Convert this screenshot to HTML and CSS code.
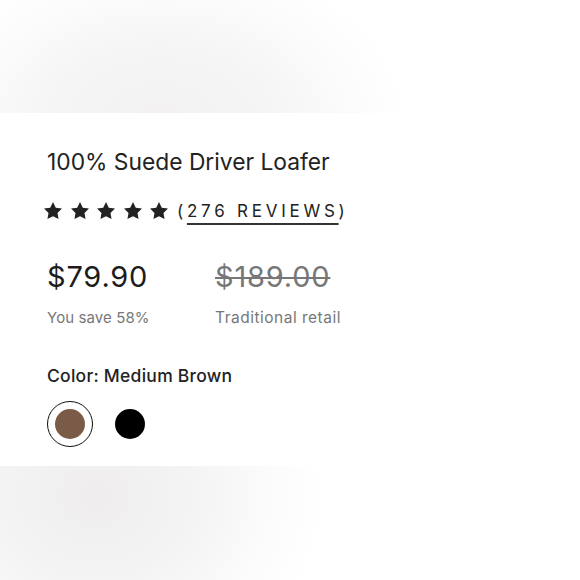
FILE: index.html
```html
<!DOCTYPE html>
<html lang="en">
<head>
<meta charset="utf-8">
<title>100% Suede Driver Loafer</title>
<link rel="stylesheet" href="styles.css">
</head>
<body>
<div class="backdrop-top"></div>
<section class="panel">
  <h1 class="title">100% Suede Driver Loafer</h1>
  <div class="rating">
    <div class="stars">
      <svg class="star" viewBox="2 2 20 19.02"><path d="M12 2l3.09 6.26L22 9.27l-5 4.87 1.18 6.88L12 17.77l-6.18 3.25L7 14.14 2 9.27l6.91-1.01L12 2z"/></svg>
      <svg class="star" viewBox="2 2 20 19.02"><path d="M12 2l3.09 6.26L22 9.27l-5 4.87 1.18 6.88L12 17.77l-6.18 3.25L7 14.14 2 9.27l6.91-1.01L12 2z"/></svg>
      <svg class="star" viewBox="2 2 20 19.02"><path d="M12 2l3.09 6.26L22 9.27l-5 4.87 1.18 6.88L12 17.77l-6.18 3.25L7 14.14 2 9.27l6.91-1.01L12 2z"/></svg>
      <svg class="star" viewBox="2 2 20 19.02"><path d="M12 2l3.09 6.26L22 9.27l-5 4.87 1.18 6.88L12 17.77l-6.18 3.25L7 14.14 2 9.27l6.91-1.01L12 2z"/></svg>
      <svg class="star" viewBox="2 2 20 19.02"><path d="M12 2l3.09 6.26L22 9.27l-5 4.87 1.18 6.88L12 17.77l-6.18 3.25L7 14.14 2 9.27l6.91-1.01L12 2z"/></svg>
    </div>
    <span class="reviews">(<a class="reviews-link" href="#">276 REVIEWS</a>)</span>
  </div>
  <div class="prices">
    <div class="price-col price-col--now">
      <div class="price">$79.90</div>
      <div class="price-note">You save 58%</div>
    </div>
    <div class="price-col price-col--old">
      <div class="price price--old">$189.00</div>
      <div class="price-note">Traditional retail</div>
    </div>
  </div>
  <div class="color-label">Color: Medium Brown</div>
  <div class="swatches">
    <span class="swatch swatch--selected"><span class="swatch-dot swatch-dot--brown"></span></span>
    <span class="swatch swatch--plain"><span class="swatch-dot swatch-dot--black"></span></span>
  </div>
</section>
<div class="backdrop-bottom"></div>
</body>
</html>
```
FILE: styles.css
```css
html, body {
  margin: 0;
  padding: 0;
  background: #fff;
}
body {
  font-family: Inter, "Liberation Sans", sans-serif;
  color: #222;
  width: 580px;
  height: 580px;
  overflow: hidden;
}
.backdrop-top {
  height: 113px;
  background: radial-gradient(ellipse 250px 180px at 160px 130px, #f2f0f0 0%, #f6f5f5 45%, #fbfbfb 75%, #fff 100%);
}
.backdrop-bottom {
  height: 114px;
  background: radial-gradient(ellipse 230px 200px at 95px 30px, #efeded 0%, #f4f3f3 40%, #fbfbfb 75%, #fff 100%);
}
.panel {
  background: #fff;
  padding: 35px 0 19px 47px;
}
.title {
  margin: 0;
  font-size: 22.8px;
  line-height: 28px;
  font-weight: 400;
  color: #222;
}
.rating {
  margin-top: 23px;
  display: flex;
  align-items: center;
  height: 24px;
  margin-left: -3px;
}
.stars {
  display: flex;
  gap: 8.5px;
}
.star {
  width: 18px;
  height: 17.1px;
  fill: #222;
  display: block;
}
.reviews {
  margin-left: 9px;
  font-size: 17px;
  line-height: 24px;
  letter-spacing: 3.75px;
  color: #222;
}
.reviews-link {
  color: #222;
  text-decoration: underline;
  text-decoration-thickness: 2px;
  text-underline-offset: 6px;
  text-decoration-color: #333;
}
.prices {
  margin-top: 37px;
  display: flex;
}
.price-col--now {
  width: 168px;
}
.price {
  font-size: 29px;
  line-height: 34px;
  letter-spacing: 0.8px;
  color: #1c1c1c;
}
.price--old {
  color: #777;
  text-decoration: line-through;
  text-decoration-thickness: 2px;
}
.price-note {
  margin-top: 13.5px;
  font-size: 15px;
  line-height: 20px;
  letter-spacing: 0.1px;
  color: #777;
}
.price-col--old .price-note {
  font-size: 15.5px;
  letter-spacing: 0.5px;
}
.color-label {
  margin-top: 36.5px;
  font-size: 17.5px;
  line-height: 24px;
  letter-spacing: 0.25px;
  font-weight: 500;
  color: #222;
}
.swatches {
  margin-top: 13px;
  display: flex;
  align-items: center;
  gap: 22px;
}
.swatch {
  width: 46px;
  height: 46px;
  display: flex;
  align-items: center;
  justify-content: center;
  border-radius: 50%;
  box-sizing: border-box;
}
.swatch--plain {
  width: 30px;
}
.swatch--selected {
  border: 1.5px solid #111;
}
.swatch-dot {
  width: 30px;
  height: 30px;
  border-radius: 50%;
  display: block;
}
.swatch-dot--brown {
  background: #7a5b48;
}
.swatch-dot--black {
  background: #000;
}
```
